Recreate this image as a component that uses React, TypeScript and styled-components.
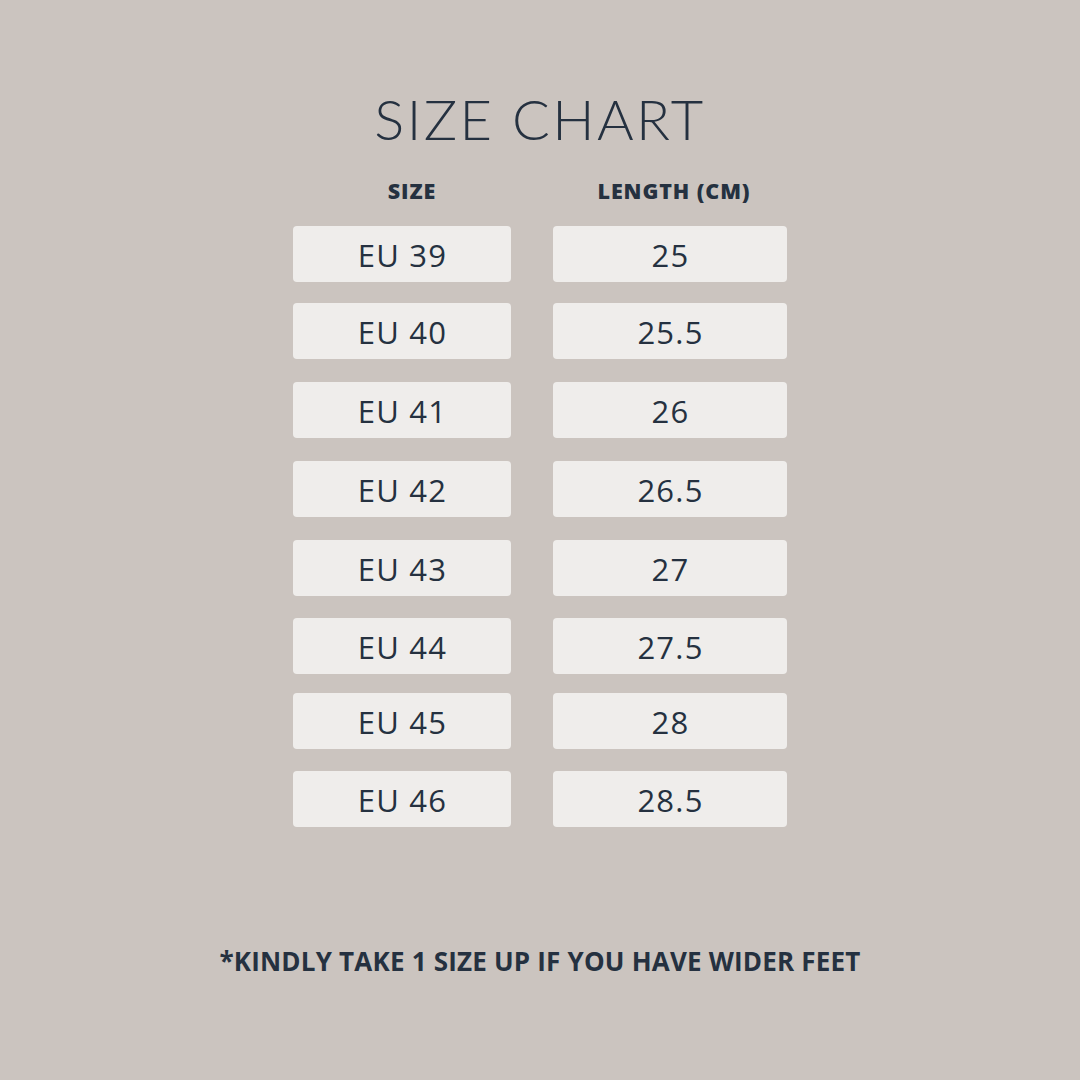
import React from "react";
import styled, { createGlobalStyle } from "styled-components";

const Global = createGlobalStyle`
  html, body { margin: 0; padding: 0; }
  body { background: #cbc4bf; }
`;

const Page = styled.div`
  width: 1080px;
  height: 1080px;
  background: #cbc4bf;
  color: #253140;
  font-family: "Open Sans", "Liberation Sans", sans-serif;
  display: flex;
  flex-direction: column;
  align-items: center;
  box-sizing: border-box;
  padding-top: 85px;
`;

const Title = styled.h1`
  margin: 0;
  font-family: Lato, "Open Sans", sans-serif;
  font-weight: 300;
  font-size: 56px;
  line-height: 68px;
  letter-spacing: 2.4px;
  color: #253140;
`;

const Table = styled.div`
  display: grid;
  grid-template-columns: 218px 234px;
  column-gap: 42px;
  margin-top: 24px;
`;

const Header = styled.div<{ $shift: number }>`
  font-weight: 800;
  font-size: 21.5px;
  line-height: 28px;
  letter-spacing: 0.9px;
  text-align: center;
  padding-left: ${(p) => p.$shift}px;
  margin-bottom: 21px;
`;

const Cell = styled.div<{ $top: number }>`
  height: 56px;
  box-sizing: border-box;
  padding-top: 2px;
  margin-top: ${(p) => p.$top}px;
  background: #efedeb;
  border-radius: 4px;
  display: flex;
  align-items: center;
  justify-content: center;
  font-size: 31px;
  font-weight: 400;
  letter-spacing: 1.2px;
  text-indent: 1px;
`;

const Note = styled.div`
  margin-top: 116px;
  font-weight: 700;
  font-size: 26px;
  line-height: 36px;
  letter-spacing: 0.2px;
`;

const rows: [string, string, number][] = [
  ["EU 39", "25", 0],
  ["EU 40", "25.5", 21],
  ["EU 41", "26", 23],
  ["EU 42", "26.5", 23],
  ["EU 43", "27", 23],
  ["EU 44", "27.5", 22],
  ["EU 45", "28", 19],
  ["EU 46", "28.5", 22],
];

export default function App() {
  return (
    <Page>
      <Global />
      <Title>SIZE CHART</Title>
      <Table>
        <Header $shift={20}>SIZE</Header>
        <Header $shift={8}>LENGTH (CM)</Header>
        {rows.map(([s, l, t]) => (
          <React.Fragment key={s}>
            <Cell $top={t}>{s}</Cell>
            <Cell $top={t}>{l}</Cell>
          </React.Fragment>
        ))}
      </Table>
      <Note>*KINDLY TAKE 1 SIZE UP IF YOU HAVE WIDER FEET</Note>
    </Page>
  );
}
